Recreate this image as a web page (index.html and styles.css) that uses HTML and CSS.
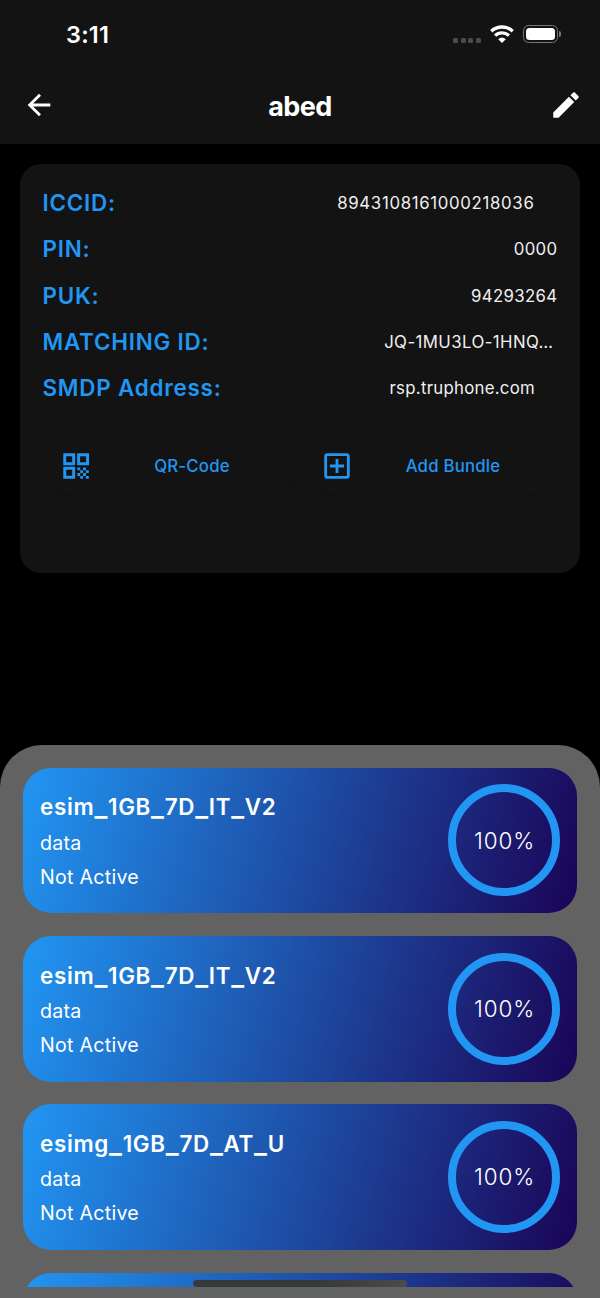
FILE: index.html
```html
<!DOCTYPE html>
<html lang="en">
<head>
    <meta charset="UTF-8">
    <meta name="viewport" content="width=device-width, initial-scale=1.0">
    <title>abed</title>
    <link rel="stylesheet" href="styles.css">
</head>
<body>
    <div class="screen">
        <header class="header">
            <div class="status-bar">
                <span class="time">3:11</span>
                <div class="status-icons">
                    <div class="signal"><i></i><i></i><i></i><i></i></div>
                    <svg class="wifi" viewBox="0 0 24 18" fill="none" stroke="#fff">
                        <path d="M1.3 6.2C7.3 .6 16.7 .6 22.7 6.2" stroke-width="3.3"/>
                        <path d="M5.1 10.6C9 7 15 7 18.9 10.6" stroke-width="3.3"/>
                        <path d="M8.2 14.2Q12 10.6 15.8 14.2L12 18Z" fill="#fff" stroke="none"/>
                    </svg>
                    <div class="battery"><span></span></div>
                </div>
            </div>
            <div class="app-bar">
                <svg class="icon" viewBox="0 0 24 24"><path d="M20 11H7.83l5.59-5.59L12 4l-8 8 8 8 1.41-1.41L7.83 13H20v-2z"/></svg>
                <h1>abed</h1>
                <svg class="icon edit" viewBox="0 0 24 24"><path d="M3 17.25V21h3.75L17.81 9.94l-3.75-3.75L3 17.25zM20.71 7.04c.39-.39.39-1.02 0-1.41l-2.34-2.34c-.39-.39-1.02-.39-1.41 0l-1.83 1.83 3.75 3.75 1.83-1.83z"/></svg>
            </div>
        </header>

        <section class="details">
            <dl class="info">
                <div class="row"><dt>ICCID:</dt><dd class="iccid">8943108161000218036</dd></div>
                <div class="row"><dt>PIN:</dt><dd>0000</dd></div>
                <div class="row"><dt>PUK:</dt><dd>94293264</dd></div>
                <div class="row"><dt>MATCHING ID:</dt><dd class="matching">JQ-1MU3LO-1HNQ…</dd></div>
                <div class="row"><dt>SMDP Address:</dt><dd class="smdp">rsp.truphone.com</dd></div>
            </dl>
            <div class="actions">
                <button class="action">
                    <svg class="icon" viewBox="0 0 24 24"><path d="M3 11.4h8.4V3H3v8.4zM5.1 5.1h4.2v4.2H5.1V5.1zM3 21h8.4v-8.4H3V21zm2.1-6.3h4.2v4.2H5.1v-4.2zM12.8 3v8.4h8.4V3h-8.4zm6.3 6.3h-4.2V5.1h4.2v4.2zM19 19h2v2h-2zM13 13h2v2h-2zM15 15h2v2h-2zM13 17h2v2h-2zM15 19h2v2h-2zM17 17h2v2h-2zM17 13h2v2h-2zM19 15h2v2h-2z"/></svg>
                    <span>QR-Code</span>
                </button>
                <button class="action">
                    <svg class="icon" viewBox="0 0 24 24"><path d="M19 3H5c-1.11 0-2 .9-2 2v14c0 1.1.89 2 2 2h14c1.1 0 2-.9 2-2V5c0-1.1-.9-2-2-2zm0 16H5V5h14v14zm-8-2h2v-4h4v-2h-4V7h-2v4H7v2h4z"/></svg>
                    <span>Add Bundle</span>
                </button>
            </div>
        </section>

        <section class="sheet">
            <div class="bundles">
                <article class="bundle">
                    <div>
                        <h2>esim<i>_</i>1GB<i>_</i>7D<i>_</i>IT<i>_</i>V2</h2>
                        <p>data</p>
                        <p>Not Active</p>
                    </div>
                    <div class="ring">100%</div>
                </article>
                <article class="bundle">
                    <div>
                        <h2>esim<i>_</i>1GB<i>_</i>7D<i>_</i>IT<i>_</i>V2</h2>
                        <p>data</p>
                        <p>Not Active</p>
                    </div>
                    <div class="ring">100%</div>
                </article>
                <article class="bundle">
                    <div>
                        <h2>esimg<i>_</i>1GB<i>_</i>7D<i>_</i>AT<i>_</i>U</h2>
                        <p>data</p>
                        <p>Not Active</p>
                    </div>
                    <div class="ring">100%</div>
                </article>
                <article class="bundle"></article>
            </div>
        </section>
        <div class="home-indicator"></div>
    </div>
</body>
</html>
```
FILE: styles.css
```css
* {
    box-sizing: border-box;
}

body {
    margin: 0;
    background: #000;
    color: #fff;
    font-family: Inter, "Liberation Sans", sans-serif;
}

.screen {
    position: relative;
    display: flex;
    flex-direction: column;
    width: 600px;
    height: 1298px;
    overflow: hidden;
}

h1, h2, p, dl, dd {
    margin: 0;
}

.header {
    height: 144.4px;
    background: #131313;
}

.status-bar {
    display: flex;
    align-items: center;
    justify-content: space-between;
    height: 66px;
    padding: 2px 38px 0 66px;
}

.time {
    font-size: 23.5px;
    font-weight: 600;
    letter-spacing: 0.2px;
}

.status-icons {
    display: flex;
    align-items: center;
}

.signal {
    display: flex;
    gap: 2.6px;
    margin: 13px 9px 0 0;
}

.signal i {
    width: 5px;
    height: 5px;
    border-radius: 1.5px;
    background: #4b4b4b;
}

.wifi {
    width: 24px;
    height: 18px;
    margin-right: 9px;
}

.battery {
    position: relative;
    width: 35px;
    height: 18px;
    margin-right: 4px;
    padding: 2px;
    border: 1px solid #777;
    border-radius: 5.5px;
}

.battery span {
    display: block;
    height: 100%;
    border-radius: 3.5px;
    background: #fff;
}

.battery::after {
    content: "";
    position: absolute;
    right: -4px;
    top: 5px;
    width: 2px;
    height: 6px;
    border-radius: 0 2px 2px 0;
    background: #777;
}

.app-bar {
    display: flex;
    align-items: center;
    justify-content: space-between;
    height: 78px;
    padding: 0 17px 0 22px;
}

.icon {
    width: 34px;
    height: 34px;
    fill: currentColor;
}

.app-bar h1 {
    margin: 3px 5px 0 0;
    font-size: 27px;
    font-weight: 700;
    letter-spacing: -0.6px;
}

.details {
    height: 409px;
    margin: 20px 20px 0;
    padding: 15px 22.5px 0;
    border-radius: 21px;
    background: #131313;
}

.row {
    display: flex;
    align-items: center;
    justify-content: space-between;
    height: 46.25px;
}

.row dt {
    color: #2196f3;
    font-size: 22.4px;
    font-weight: 600;
    letter-spacing: 0.8px;
}

.row dd {
    padding-top: 1px;
    color: #f0f0f0;
    font-size: 16.8px;
    letter-spacing: 0.35px;
}

.row .iccid {
    margin-right: 23px;
    letter-spacing: 0.68px;
}

.row .matching {
    margin-right: 4px;
    letter-spacing: 0.42px;
}

.row .smdp {
    margin-right: 22.5px;
    letter-spacing: 0.27px;
}

.actions {
    display: flex;
    gap: 7px;
    margin-top: 27px;
}

.action {
    display: flex;
    flex: 1;
    align-items: center;
    height: 56px;
    padding: 0 16px;
    border: 0;
    border-radius: 28px;
    background: #131313;
    box-shadow: 0 1px 2px rgba(0, 0, 0, 0.15);
    color: #2196f3;
    font-family: inherit;
    font-size: 16.8px;
    font-weight: 500;
    letter-spacing: 0.2px;
}

.action span {
    flex: 1;
    padding-left: 11px;
    text-align: center;
}

.sheet {
    flex: 1;
    margin-top: 171.6px;
    padding: 23px 23px 11px;
    border-radius: 42px 42px 0 0;
    background: #626262;
}

.bundles {
    display: flex;
    flex-direction: column;
    gap: 22.7px;
    height: 519px;
    overflow: hidden;
}

.bundle {
    display: flex;
    flex-shrink: 0;
    justify-content: space-between;
    height: 145.5px;
    padding: 16.5px 17px;
    border-radius: 28px;
    background: linear-gradient(104.7deg, #2196f3, #1a0456);
}

.bundle h2 {
    margin-top: 9px;
    font-size: 22.4px;
    font-weight: 600;
    line-height: 27px;
    letter-spacing: 0.7px;
}

/* wider underscores between the parts of the bundle name */
.bundle h2 i {
    font-size: 27.5px;
    font-style: normal;
    line-height: 0;
    vertical-align: -1px;
}

.bundle p {
    margin-top: 6px;
    font-size: 19.6px;
    line-height: 28px;
    letter-spacing: 0.27px;
}

.bundle h2 + p {
    margin-top: 8.5px;
}

.ring {
    display: flex;
    align-items: center;
    justify-content: center;
    width: 112px;
    height: 112px;
    padding-left: 1px;
    border: 8.5px solid #2196f3;
    border-radius: 50%;
    font-size: 22.4px;
    font-weight: 300;
    letter-spacing: 0.9px;
}

.home-indicator {
    position: absolute;
    left: 193px;
    top: 1279.5px;
    width: 214px;
    height: 7px;
    border-radius: 4px;
    background: linear-gradient(90deg, #363a3a 60%, #4b4b4b);
}
```
